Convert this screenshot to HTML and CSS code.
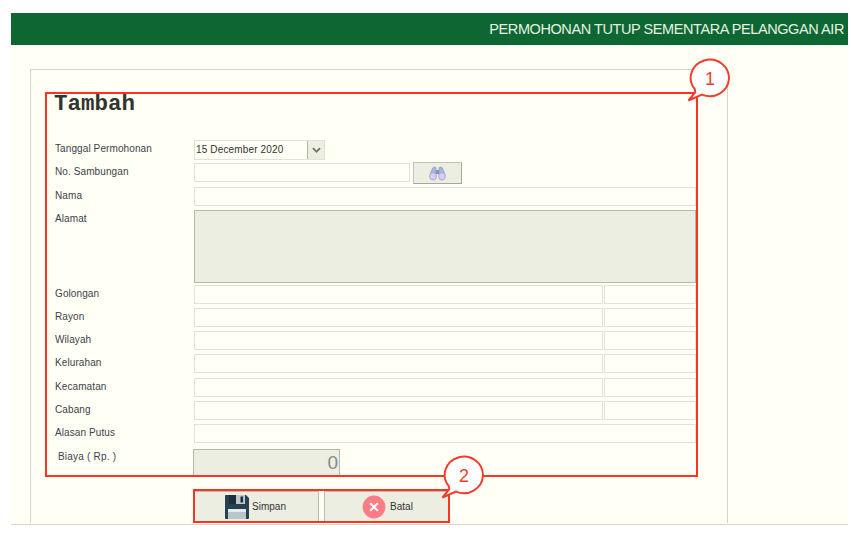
FILE: index.html
```
<!DOCTYPE html>
<html lang="id">
<head>
<meta charset="utf-8">
<title>Permohonan Tutup Sementara</title>
<link rel="stylesheet" href="styles.css">
</head>
<body>
<div class="window">
  <header class="bar"><span>PERMOHONAN TUTUP SEMENTARA PELANGGAN AIR</span></header>
  <main class="panel">
    <h1>Tambah</h1>
    <form class="form">
      <label>Tanggal Permohonan</label>
      <div class="fields"><div class="date"><span>15 December 2020</span><i class="drop"><svg width="9" height="7" viewBox="0 0 9 7"><path d="M1 1.2 4.5 4.8 8 1.2"/></svg></i></div></div>
      <label>No. Sambungan</label>
      <div class="fields"><div class="box number"></div><button type="button" class="find"><svg width="17" height="15" viewBox="0 0 17 15">
        <path d="M6 4h5v4H6z" fill="#8690b8"/>
        <path d="M1 9 3.5 2Q5 0 7 1.7V9zM16 9 13.5 2Q12 0 10 1.7V9z" fill="#a9b7d6" stroke="#8b98c0" stroke-width=".7"/>
        <ellipse cx="4" cy="10.3" rx="3.4" ry="3.8" fill="#d9cdf3" stroke="#a59bd0" stroke-width=".8"/>
        <ellipse cx="13" cy="10.3" rx="3.4" ry="3.8" fill="#d9cdf3" stroke="#a59bd0" stroke-width=".8"/>
      </svg></button></div>
      <label>Nama</label><div class="fields"><div class="box grow"></div></div>
      <label>Alamat</label><div class="fields"><div class="area"></div></div>
      <label>Golongan</label><div class="fields pair"><div class="box"></div><div class="box"></div></div>
      <label>Rayon</label><div class="fields pair"><div class="box"></div><div class="box"></div></div>
      <label>Wilayah</label><div class="fields pair"><div class="box"></div><div class="box"></div></div>
      <label>Kelurahan</label><div class="fields pair"><div class="box"></div><div class="box"></div></div>
      <label>Kecamatan</label><div class="fields pair"><div class="box"></div><div class="box"></div></div>
      <label>Cabang</label><div class="fields pair"><div class="box"></div><div class="box"></div></div>
      <label>Alasan Putus</label><div class="fields"><div class="box grow"></div></div>
      <label class="fee-label">Biaya ( Rp. )</label><div class="fields"><div class="fee">0</div></div>
    </form>
    <div class="actions">
      <button type="button"><svg width="24" height="24" viewBox="0 0 24 24">
        <path d="M1 0H21L24 3V23Q24 24 23 24H1Q0 24 0 23V1Q0 0 1 0z" fill="#26414f"/>
        <path d="M4 0H11V9H4z" fill="#1b303c"/><path d="M11 0H20V9H11z" fill="#bccaca"/><rect x="15.5" y="1.5" width="2.6" height="6" fill="#1b303c"/>
        <path d="M3 14H21V24H3z" fill="#b8c8ca"/><path d="M3 14H21V17H3z" fill="#e3ecea"/>
      </svg><span>Simpan</span></button>
      <button type="button" class="cancel"><svg width="24" height="24" viewBox="0 0 24 24">
        <circle cx="12" cy="12" r="11.4" fill="#fb7c84"/><path d="M8.2 8.2 15.8 15.8M15.8 8.2 8.2 15.8" stroke="#fff" stroke-width="2.1"/>
      </svg><span>Batal</span></button>
    </div>
  </main>
</div>
<div class="mark mark-form"></div>
<div class="mark mark-actions"></div>
<div class="callout callout-1"><svg width="46" height="46" viewBox="0 0 46 46"><path d="M8.8 31.2A19.1 18.3 0 1 1 16 36.6L2.5 42.5L9.3 34.2Z"/></svg><span>1</span></div>
<div class="callout callout-2"><svg width="46" height="46" viewBox="0 0 46 46"><path d="M8.8 31.2A19.1 18.3 0 1 1 16 36.6L2.5 42.5L9.3 34.2Z"/></svg><span>2</span></div>
</body>
</html>
```
FILE: styles.css
```
* { box-sizing: border-box; }
body {
  margin: 0;
  padding: 13px 3px 0 11px;
  height: 533px;
  overflow: hidden;
  background: #fff;
  font: 10px/12px "Liberation Sans", Arial, sans-serif;
  color: #40424a;
}
.window {
  height: 512px;
  background: #fffff6;
  border-bottom: 1px solid #d3d8ca;
  overflow: hidden;
}
.bar {
  height: 32px;
  display: flex;
  align-items: center;
  justify-content: flex-end;
  padding: 0 4px 0 0;
  background: #0e6632;
  color: #e4f3e4;
  font-size: 14.5px;
  letter-spacing: -.42px;
  line-height: 18px;
  white-space: nowrap;
}
.panel {
  width: 698px;
  height: 454px;
  margin: 24px 0 0 19px;
  padding: 23px 31px 0 24px;
  border: 1px solid #d2d7cc;
  border-bottom: 0;
}
h1 {
  margin: 0 0 0 -1px;
  height: 47px;
  font: bold 22.5px/22px "Courier New", "Liberation Mono", monospace;
  color: #333430;
}
.form {
  display: grid;
  grid-template-columns: 139px 502px;
  grid-template-rows: 23px 24px 23px 75px 23px 23px 23px 24px 23px 23px 25px 42px;
}
label { padding-top: 3px; white-space: nowrap; letter-spacing: .1px; }
.fee-label { padding: 2px 0 0 3px; letter-spacing: .2px; }
.fields { display: flex; align-items: flex-start; }
.box, .date { height: 19px; border: 1px solid #dfe2da; }
.grow { flex: 1; }
.number { width: 216px; }
.pair { display: grid; grid-template-columns: 409px 92px; gap: 1px; }
.date { display: flex; width: 131px; height: 20px; }
.date span { flex: 1; padding: 3px 0 0 1px; white-space: nowrap; color: #333; letter-spacing: .15px; }
.drop {
  display: flex;
  align-items: center;
  justify-content: center;
  width: 17px;
  background: #ebeee1;
  border-left: 1px solid #b0b4a8;
}
.drop path { fill: none; stroke: #6c7066; stroke-width: 1.8; }
button {
  display: flex;
  align-items: center;
  justify-content: center;
  padding: 0;
  background: #ebeee1;
  border: 1px solid #b9bdb0;
  font: inherit;
  color: inherit;
}
.find { width: 49px; height: 22px; margin: -1px 0 0 3px; border-color: #c0c4b7 #a5a99d #a5a99d #c0c4b7; }
.area { flex: 1; height: 73px; background: #ebeee1; border: 1px solid #b4b8ab; }
.fee {
  width: 147px;
  height: 27px;
  margin-left: -1px;
  padding: 2px 1px 0 0;
  background: #ebeee1;
  border: 1px solid #b4b8ab;
  text-align: right;
  font-size: 19px;
  line-height: 22px;
  color: #858994;
}
.actions { display: flex; gap: 5px; margin-left: 139px; }
.actions button { width: 125px; height: 31px; gap: 3px; padding-right: 2px; color: #333; }
.actions .cancel { gap: 4px; padding: 0 0 0 2px; }
.mark { position: absolute; border: 2px solid #fb3320; }
.mark-form { left: 45px; top: 92px; width: 653px; height: 385px; }
.mark-actions { left: 193px; top: 489px; width: 257px; height: 34px; }
.callout { position: absolute; width: 46px; height: 46px; }
.callout svg { display: block; }
.callout path { fill: #fff; stroke: #f53c2b; stroke-width: 2; stroke-linejoin: miter; }
.callout span {
  position: absolute;
  left: 5px;
  top: 11px;
  width: 38px;
  text-align: center;
  font-size: 18px;
  line-height: 20px;
  color: #f53c2b;
}
.callout-1 { left: 686px; top: 58px; }
.callout-2 { left: 440px; top: 455px; }
```
